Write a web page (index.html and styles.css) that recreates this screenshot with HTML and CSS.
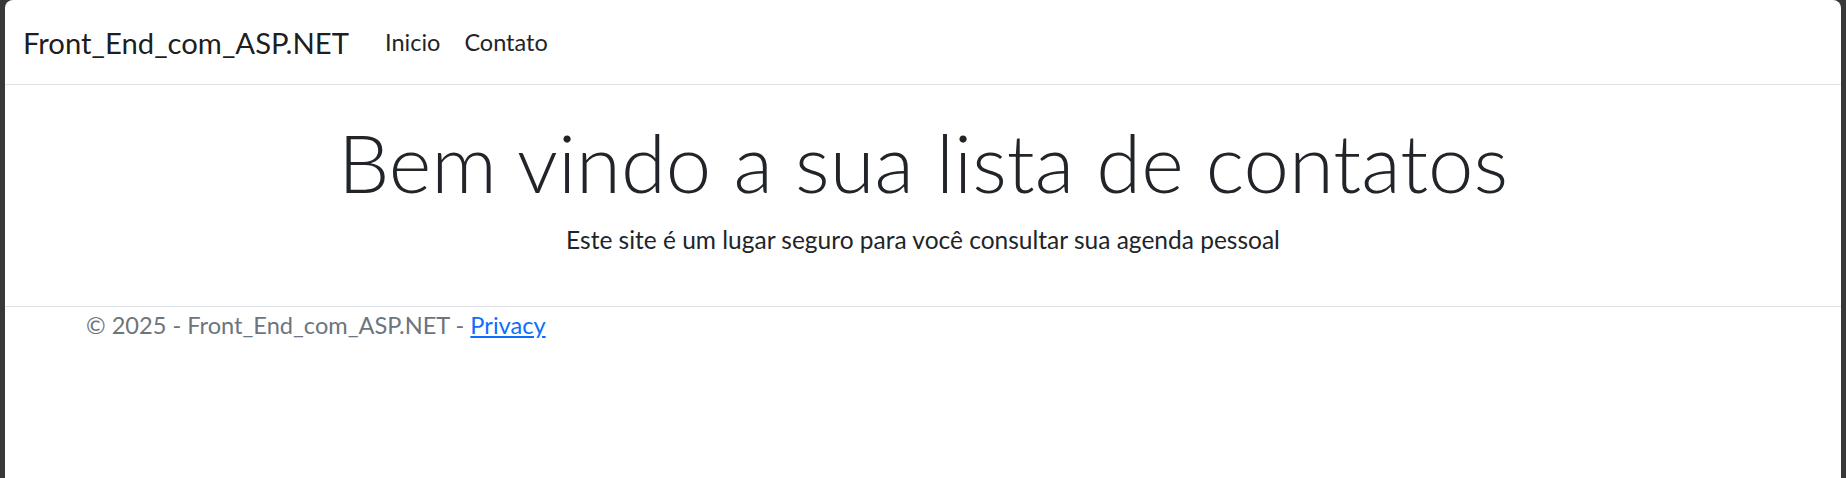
FILE: index.html
```html
<!DOCTYPE html>
<html lang="pt-br">
<head>
<meta charset="utf-8">
<title>Front_End_com_ASP.NET</title>
<link rel="stylesheet" href="styles.css">
</head>
<body>
<div class="window">
  <header>
    <nav class="navbar">
      <div class="container-fluid">
        <a class="navbar-brand" href="#">Front_End_com_ASP.NET</a>
        <ul class="navbar-nav">
          <li><a class="nav-link" href="#">Inicio</a></li>
          <li><a class="nav-link" href="#">Contato</a></li>
        </ul>
      </div>
    </nav>
  </header>
  <div class="container">
    <main class="main">
      <div class="text-center">
        <h1 class="display-4">Bem vindo a sua lista de contatos</h1>
        <p class="lead-text">Este site é um lugar seguro para você consultar sua agenda pessoal</p>
      </div>
    </main>
  </div>
  <footer class="footer">
    <div class="container">
      &copy; 2025 - Front_End_com_ASP.NET - <a class="footer-link" href="#">Privacy</a>
    </div>
  </footer>
</div>
</body>
</html>
```
FILE: styles.css
```css
*, *::before, *::after {
  box-sizing: border-box;
}
html, body {
  margin: 0;
  padding: 0;
}
body {
  background: #383838;
  font-family: Lato, "Open Sans", sans-serif;
  color: #212529;
  font-size: 24px;
  line-height: 1.5;
}
.window {
  margin: 0 5px;
  background: #ffffff;
  border-radius: 8px 8px 0 0;
  min-height: 478px;
  overflow: hidden;
}
.navbar {
  padding: 12px 0;
  border-bottom: 1px solid #dee2e6;
  margin-bottom: 24px;
}
.container-fluid {
  padding: 0 18px;
  display: flex;
  align-items: center;
}
.navbar-brand {
  padding: 7.5px 0;
  margin-right: 24px;
  font-size: 29.25px;
  line-height: 45px;
  color: rgba(0, 0, 0, 0.9);
  text-decoration: none;
  white-space: nowrap;
}
.navbar-nav {
  display: flex;
  list-style: none;
  margin: 0;
  padding: 0;
}
.nav-link {
  display: block;
  padding: 12px;
  font-size: 23.5px;
  line-height: 36px;
  color: #212529;
  text-decoration: none;
}
.container {
  max-width: 1710px;
  margin: 0 auto;
  padding: 0 18px;
}
.main {
  padding-bottom: 24px;
}
.text-center {
  text-align: center;
}
.display-4 {
  margin: 0 0 6px;
  font-size: 81.5px;
  font-weight: 300;
  line-height: 106.8px;
  color: #212529;
}
.lead-text {
  margin: 0 0 24px;
  font-size: 24.5px;
  line-height: 36px;
}
.footer {
  border-top: 1px solid #dee2e6;
  color: #6c757d;
  font-size: 23.6px;
  line-height: 36px;
  white-space: nowrap;
}
.footer-link {
  color: #0d6efd;
  text-decoration: underline;
}
```
